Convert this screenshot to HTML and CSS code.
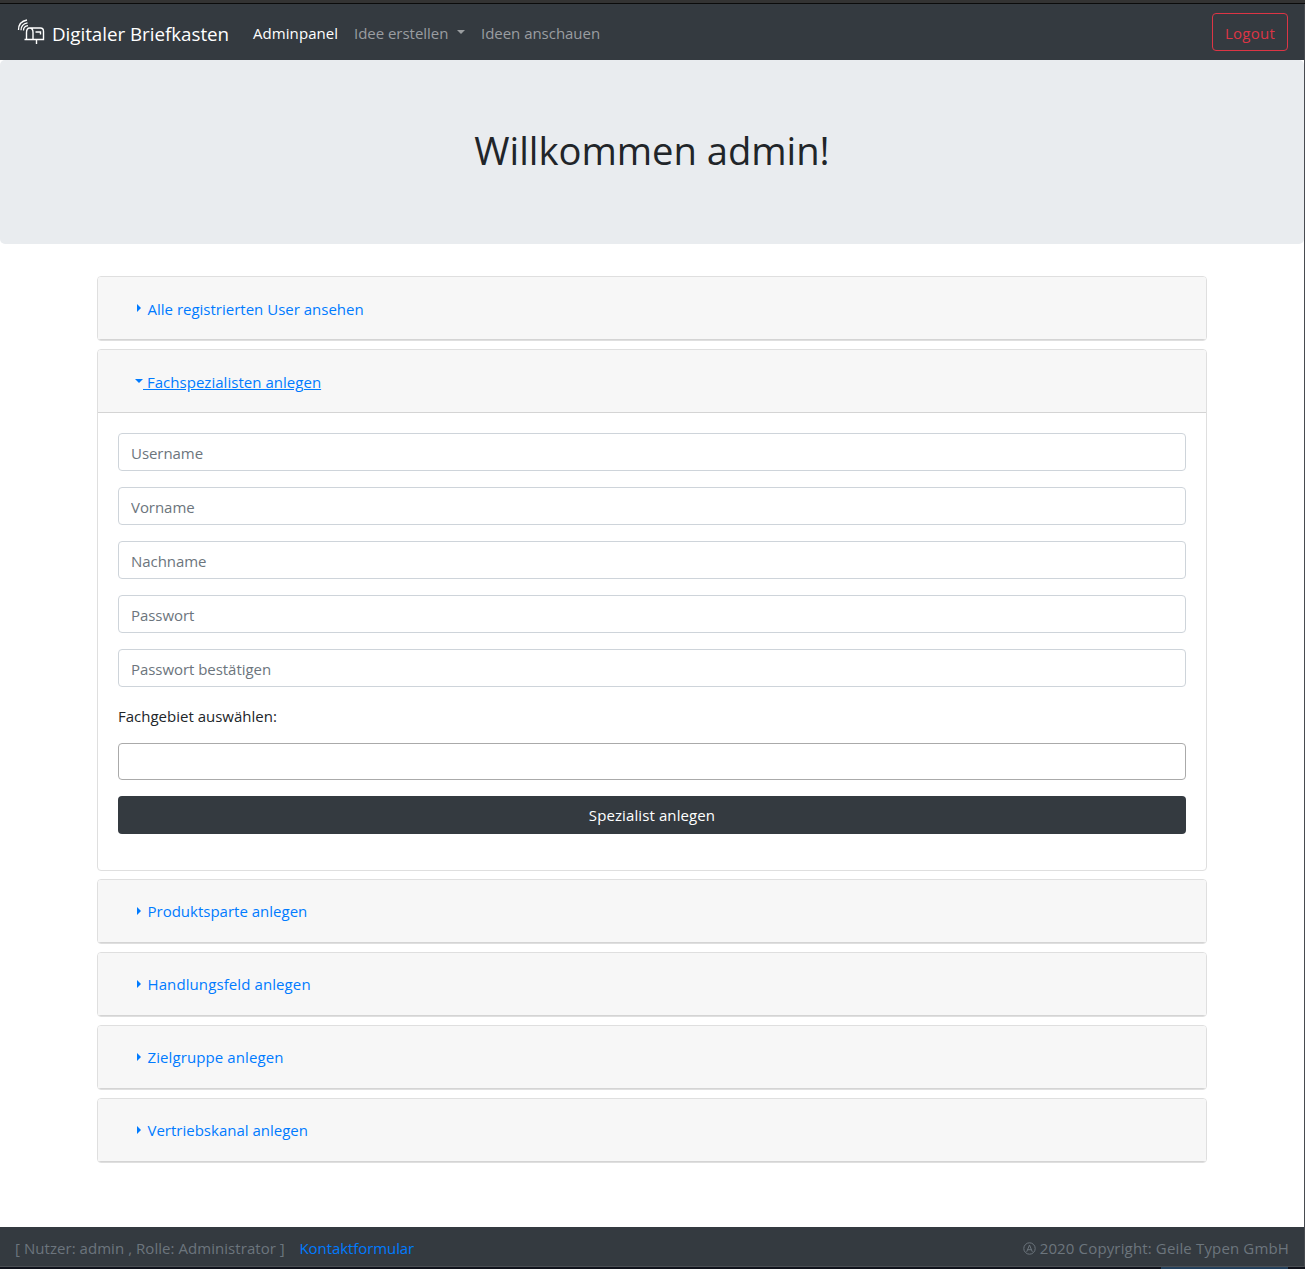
FILE: index.html
```html
<!DOCTYPE html>
<html lang="de">
<head>
<meta charset="utf-8">
<title>Digitaler Briefkasten</title>
<link rel="stylesheet" href="styles.css">
</head>
<body>
<div class="titlebar"></div>
<div class="page">
  <nav class="navbar">
    <a class="brand">
      <svg class="logo" width="30" height="30" viewBox="0 0 30 30" fill="none" stroke="#fff" stroke-width="1.4">
        <path d="M2.500 15C2.500 10 5.500 6 11 5M5 15.300C5 11.500 7.500 8.500 11.500 7.800M7.500 15.500C7.500 12.800 9 11 12 10.600" stroke-width="1.300"/>
        <path d="M10.500 24.500V17.500Q10.500 13 13.700 13Q17 13 17 17.500V24.500M13.700 13H24.500Q27.500 13 27.500 16.500V24.500H8.500M20.500 24.500V29M19.500 17H24.500V19.500"/>
      </svg>
      <span class="t-brand">Digitaler Briefkasten</span>
    </a>
    <div class="links">
      <a class="active t-admin">Adminpanel</a>
      <a class="dropdown"><span class="t-create">Idee erstellen</span><i class="caret"></i></a>
      <a class="t-view">Ideen anschauen</a>
    </div>
    <button class="logout">Logout</button>
  </nav>
  <header class="jumbotron"><h1>Willkommen admin!</h1></header>
  <main class="container">
    <section class="card"><div class="card-header"><i class="arrow"></i><a>Alle registrierten User ansehen</a></div></section>
    <section class="card open">
      <div class="card-header"><i class="arrow down"></i><a class="underlined">&nbsp;Fachspezialisten anlegen</a></div>
      <form class="card-body">
        <input type="text" placeholder="Username">
        <input type="text" placeholder="Vorname">
        <input type="text" placeholder="Nachname">
        <input type="password" placeholder="Passwort">
        <input type="password" placeholder="Passwort bestätigen">
        <label>Fachgebiet auswählen:</label>
        <div class="select"></div>
        <button type="button" class="submit">Spezialist anlegen</button>
      </form>
    </section>
    <section class="card"><div class="card-header"><i class="arrow"></i><a>Produktsparte anlegen</a></div></section>
    <section class="card"><div class="card-header wide"><i class="arrow"></i><a>Handlungsfeld anlegen</a></div></section>
    <section class="card"><div class="card-header wide"><i class="arrow"></i><a>Zielgruppe anlegen</a></div></section>
    <section class="card"><div class="card-header"><i class="arrow"></i><a>Vertriebskanal anlegen</a></div></section>
  </main>
  <footer class="footer">
    <span class="t-user">[ Nutzer: admin , Rolle: Administrator ]</span>
    <a>Kontaktformular</a>
    <span class="copyright"><svg width="13" height="13" viewBox="0 0 13 13" fill="none" stroke="#6c757d"><circle cx="6.500" cy="6.500" r="5.700"/><path d="M3.700 9.800L6.500 3L9.300 9.800M4.700 7.700H8.300"/></svg><span class="t-copy">2020 Copyright: Geile Typen GmbH</span></span>
  </footer>
</div>
<div class="taskbar"><i></i></div>
</body>
</html>
```
FILE: styles.css
```css
* { box-sizing: border-box; }
body {
  margin: 0;
  height: 1269px;
  overflow: hidden;
  display: flex;
  flex-direction: column;
  font: 15px/24px "Open Sans", "Noto Sans", sans-serif;
  letter-spacing: -0.03px;
  color: #212529;
  background: #fff;
}
.titlebar { height: 4px; flex: none; background: #333; border-bottom: 1px solid #0b0b0b; }
.page { flex: 1; display: flex; flex-direction: column; border-right: 1px solid #484b50; }
.navbar { height: 56px; flex: none; display: flex; align-items: center; padding: 0 16px; background: #343a40; }
.brand { display: flex; align-items: center; gap: 6px; color: #fff; font-size: 18.8px; line-height: 30px; white-space: nowrap; width: 213px; }
.t-brand { padding-top: 3px; }
.logo { flex: none; margin-top: -4px; }
.links { display: flex; gap: 16px; margin: 2px 0 0 24px; color: #9a9da0; white-space: nowrap; }
.links .active { color: #fff; }
.t-admin { width: 85px; letter-spacing: 0.07px; }
.dropdown { display: flex; width: 111px; }
.caret { margin: 9px 0 0 auto; width: 0; height: 0; border: 4px solid transparent; border-top-color: currentColor; border-bottom: 0; }
.logout { margin-left: auto; width: 76px; height: 38px; padding: 2px 0 0; border: 1px solid #dc3545; border-radius: 4px; background: none; color: #dc3545; font: inherit; letter-spacing: 0.25px; }
.jumbotron { height: 184px; flex: none; background: #e9ecef; border-radius: 5px; text-align: center; padding-top: 66px; }
h1 { margin: 0; font-size: 38.2px; font-weight: 400; line-height: 48px; }
.container { width: 1110px; margin: 32px auto 0; display: flex; flex-direction: column; gap: 8px; }
.card { border: 1px solid #dfdfdf; border-radius: 4px; overflow: hidden; }
.card-header { height: 63px; display: flex; align-items: center; padding: 1px 20px 0 37px; background: #f7f7f7; border-bottom: 1px solid #d4d4d4; color: #007bff; letter-spacing: 0; }
.card-header.wide { letter-spacing: 0.1px; }
.open ~ .card .card-header { padding-top: 0; }
.open ~ .card .card-header a { margin-top: -1px; }
.arrow { width: 0; height: 0; margin: -1px 6.5px 0 2px; border: 4px solid transparent; border-left-color: currentColor; border-right: 0; }
.arrow.down { margin: -1px 0 0; border: 4px solid transparent; border-top-color: currentColor; border-bottom: 0; }
.underlined { text-decoration: underline; letter-spacing: 0.03px; }
.card-body { display: flex; flex-direction: column; gap: 16px; padding: 20px 20px 36px; }
input { height: 38px; padding: 1px 12px 0; border: 1px solid #ced4da; border-radius: 4px; font: inherit; letter-spacing: -0.05px; background: #fff; }
input::placeholder { color: #6c757d; opacity: 1; }
label { height: 24px; padding-top: 1px; letter-spacing: 0; }
.select { height: 37px; border: 1px solid #aaa; border-radius: 4px; }
.submit { height: 38px; padding: 0; border: 0; border-radius: 4px; background: #343a40; color: #fff; font: inherit; letter-spacing: 0.1px; }
.footer { height: 40px; flex: none; margin-top: auto; padding: 3px 15px 0; display: flex; align-items: center; background: #343a40; border-bottom: 1px solid #4b4f54; color: #6c757d; white-space: nowrap; }
.t-user { width: 284.5px; letter-spacing: 0.05px; }
.footer a { color: #007bff; letter-spacing: -0.08px; }
.copyright { margin-left: auto; display: flex; align-items: center; gap: 4px; letter-spacing: 0.15px; }
.taskbar { height: 2px; flex: none; background: #10131c; }
.taskbar i { display: block; width: 127px; height: 2px; margin-left: 1161px; background: #24405c; }
```
